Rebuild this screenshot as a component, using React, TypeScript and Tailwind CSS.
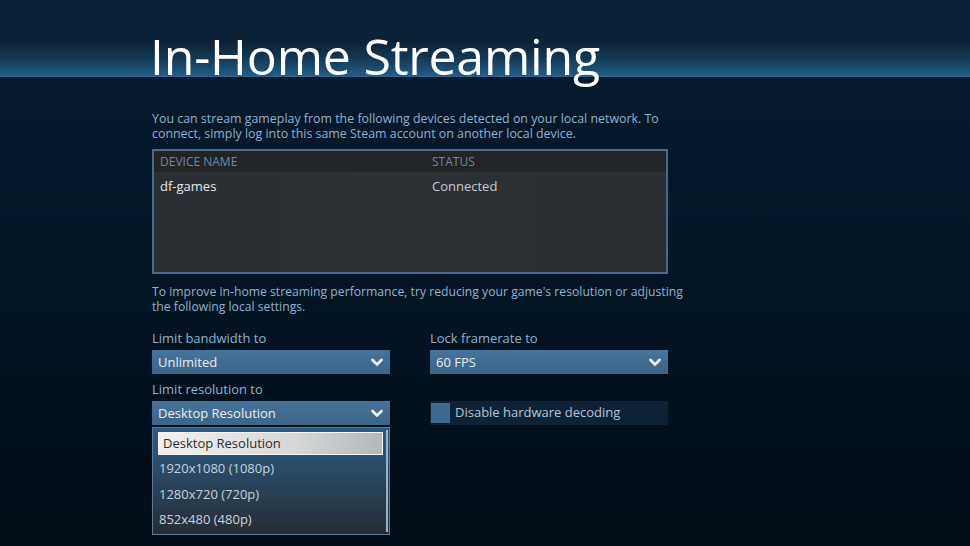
import React from "react";

const Chevron = () => (
  <svg width="12" height="9" viewBox="0 0 12 9" className="shrink-0">
    <polyline points="1.5,2 6,6.5 10.5,2" fill="none" stroke="#eef3f7" strokeWidth="2.6" strokeLinecap="round" strokeLinejoin="round" />
  </svg>
);

const Select = ({ value }: { value: string }) => (
  <div className="h-[24px] flex items-center justify-between pl-[6px] pr-[7px] bg-[linear-gradient(to_bottom,#46739a,#3b6589)] text-[13px] font-medium text-[#e6edf3] leading-none">
    <span>{value}</span>
    <Chevron />
  </div>
);

export default function App() {
  const options = ["1920x1080 (1080p)", "1280x720 (720p)", "852x480 (480p)"];
  return (
    <div
      className="min-h-[546px] w-full overflow-hidden bg-[linear-gradient(to_bottom,#061c2f_0%,#041626_45%,#020d17_100%)]"
      style={{ fontFamily: '"Open Sans", "Noto Sans", sans-serif' }}
    >
      <div className="h-[77px] flex items-end pl-[150px] border-b border-[#2a6590] bg-[linear-gradient(to_bottom,#0b2136_0%,#0b2136_55%,#133854_76%,#215c88_100%)]">
        <h1 className="text-[50px] leading-[48px] mb-[-4px] text-white font-normal tracking-[-0.2px]">
          In-Home Streaming
        </h1>
      </div>

      <div className="pl-[152px] pt-[34px] w-[720px]">
        <p className="text-[12.4px] leading-[15px] text-[#8db2cf] whitespace-nowrap">
          You can stream gameplay from the following devices detected on your local network. To
          <br />
          connect, simply log into this same Steam account on another local device.
        </p>

        <div className="mt-[8px] w-[516px] h-[125px] border-2 border-[#4b6988] bg-[linear-gradient(to_right,#2a2f34,#2c3136_50%,#2a2f33)] flex flex-col">
          <div className="h-[21px] flex items-center bg-[#222426] text-[12px] text-[#6b8ba7] uppercase">
            <div className="w-[278px] pl-[6px]">Device Name</div>
            <div>Status</div>
          </div>
          <div className="h-[29px] flex items-center text-[13px]">
            <div className="w-[278px] pl-[6px] text-[#e8e8e8] font-medium">df-games</div>
            <div className="text-[#c3c9cf]">Connected</div>
          </div>
        </div>

        <p className="mt-[10px] text-[12.2px] leading-[15px] text-[#8db2cf] whitespace-nowrap">
          To improve in-home streaming performance, try reducing your game's resolution or adjusting
          <br />
          the following local settings.
        </p>

        <div className="mt-[17px] grid grid-cols-[238px_238px] gap-x-[40px] text-[13px]">
          <div className="leading-[15px] text-[#8db2cf]">Limit bandwidth to</div>
          <div className="leading-[15px] text-[#8db2cf]">Lock framerate to</div>
          <div className="mt-[4px]">
            <Select value="Unlimited" />
          </div>
          <div className="mt-[4px]">
            <Select value="60 FPS" />
          </div>
          <div className="mt-[8px] leading-[15px] text-[#8db2cf]">Limit resolution to</div>
          <div />
          <div className="mt-[4px] relative">
            <Select value="Desktop Resolution" />
            <div className="absolute left-0 top-[26px] w-[238px] h-[108px] border border-[#557a9b] bg-[linear-gradient(to_bottom,#2d5b82_0%,#2a4760_45%,#272d33_100%)] pl-[5px] pr-[5px] pt-[4px]">
              <div className="absolute right-[1px] top-[2px] bottom-[2px] w-[2px] bg-[#98b3c8]" />
              <div className="h-[23px] mr-[1px] flex items-center pl-[4px] border border-[#f4f4f4] bg-[linear-gradient(to_right,#f0f0f0,#d6d8d9_60%,#b3b8bb)] text-[#2b2b2b]">
                Desktop Resolution
              </div>
              {options.map((o) => (
                <div key={o} className="h-[25.5px] flex items-center pl-[1px] text-[#c6d3de] pt-[2px]">
                  {o}
                </div>
              ))}
            </div>
          </div>
          <div className="mt-[4px] h-[24px] flex items-center bg-[#0d2235]">
            <div className="ml-[1px] w-[19px] h-[20px] bg-[#3d6a91]" />
            <span className="ml-[5px] text-[#b7c5d2]">Disable hardware decoding</span>
          </div>
        </div>
      </div>
    </div>
  );
}
